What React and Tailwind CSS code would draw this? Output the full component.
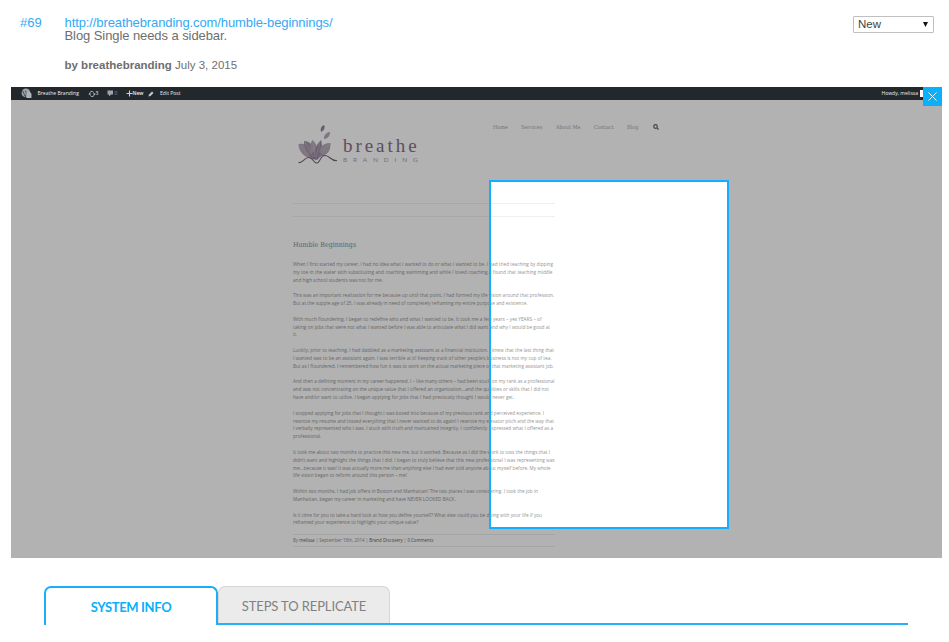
import React from "react";

// Each line of the article: [width in px, text]; null starts a new paragraph.
const ARTICLE = [
  [260, "When I first started my career, I had no idea what I wanted to do or what I wanted to be. I had tried teaching by dipping"],
  [259.5, "my toe in the water with substituting and coaching swimming and while I loved coaching, I found that teaching middle"],
  [89, "and high school students was not for me."],
  null,
  [260.5, "This was an important realization for me because up until that point, I had formed my life vision around that profession."],
  [234.5, "But at the supple age of 25, I was already in need of completely reframing my entire purpose and existence."],
  null,
  [248.5, "With much floundering, I began to redefine who and what I wanted to be. It took me a few years – yes YEARS – of"],
  [257, "taking on jobs that were not what I wanted before I was able to articulate what I did want and why I would be good at"],
  [4, "it."],
  null,
  [261, "Luckily, prior to teaching, I had dabbled as a marketing assistant at a financial institution. I knew that the last thing that"],
  [258.5, "I wanted was to be an assistant again. I was terrible at it! Keeping track of other people’s business is not my cup of tea."],
  [260.5, "But as I floundered, I remembered how fun it was to work on the actual marketing piece of that marketing assistant job."],
  null,
  [261.5, "And then a defining moment in my career happened. I – like many others – had been stuck on my rank as a professional"],
  [256, "and was not concentrating on the unique value that I offered an organization...and the qualities or skills that I did not"],
  [221, "have and/or want to utilize. I began applying for jobs that I had previously thought I would never get."],
  null,
  [251, "I stopped applying for jobs that I thought I was boxed into because of my previous rank and perceived experience. I"],
  [261, "rewrote my resume and tossed everything that I never wanted to do again! I rewrote my elevator pitch and the way that"],
  [260, "I verbally represented who I was. I stuck with truth and maintained integrity. I confidently expressed what I offered as a"],
  [27, "professional."],
  null,
  [257, "It took me about two months to practice this new me, but it worked. Because as I did the work to toss the things that I"],
  [261.5, "didn’t want and highlight the things that I did, I began to truly believe that this new professional I was representing was"],
  [257.5, "me...because it was! It was actually more me than anything else I had ever told anyone about myself before. My whole"],
  [114, "life vision began to reform around this person – me!"],
  null,
  [245, "Within two months, I had job offers in Boston and Manhattan! The two places I was considering. I took the job in"],
  [162, "Manhattan, began my career in marketing and have NEVER LOOKED BACK."],
  null,
  [249, "Is it time for you to take a hard look at how you define yourself? What else could you be doing with your life if you"],
  [125.5, "reframed your experience to highlight your unique value?"],
];

function Logo() {
  return (
    <div className="flex h-[42px] w-[130px] items-start">
      <svg className="h-[42px] w-[42px] shrink-0" viewBox="0 0 42 42" fill="none">
        <g fill="#b5a9b8">
          <path d="M27 1c1.500 2.500 0 5.500-3 7-1-3.500 .5-6 3-7Z" fill="#93849a" />
          <path d="M33 8c0 4-2 6.500-6 7-.5-3.500 2-6.500 6-7Z" />
          <path d="M1.500 20c5-1 8 0 9 3l3 11c-7-1-12-7-12-14Z" />
          <path d="M7 17c5 0 8 3 9 7l1 10c-7-3-10-9-10-17Z" fill="#a698ab" />
          <path d="M15.500 16c5 4 7 12 3 19-6-5-7-13-3-19Z" />
          <path d="M24 16c2 7 1 14-5 19-3-7 0-14 5-19Z" fill="#9b8ca1" />
          <path d="M33.500 19c0 8-2 12-12 14 0-8 3-14 12-14Z" />
          <path d="M11 31l8-4 7 3-6 6-5-1Z" fill="#9b8ca1" />
        </g>
        <path d="M3 21l10 12M8 18l8 15M16 18l2 15M23 18l-4 15M32 20l-10 13" stroke="#cdc4d0" strokeWidth=".5" />
        <path d="M1.500 38.500c4 1 6-5 10-5 5 0 5 6 8.500 5.500C23 39 23 31.500 28 31.500c5 0 6 6 12 5" stroke="#77647c" strokeWidth="1.100" />
      </svg>
      <div className="flex flex-col pl-[4px] pt-[12px]">
        <span className="whitespace-nowrap font-['Liberation_Serif',serif] text-[19px] leading-[20px] tracking-[2.950px] text-[#84718a]">breathe</span>
        <span className="whitespace-nowrap font-[Lato,sans-serif] text-[6.500px] leading-[8px] tracking-[5.800px] text-[#aca0af]">BRANDING</span>
      </div>
    </div>
  );
}

function AdminBar() {
  return (
    <div className="relative z-10 flex h-[13px] items-center bg-[#23282d] font-['Open_Sans',sans-serif] text-[5.050px] leading-[13px] whitespace-nowrap text-[#eeeeee]">
      <svg className="ml-[10px] size-[11px]" viewBox="0 0 20 20">
        <circle cx="9" cy="9" r="8" fill="#a0a5aa" />
        <path d="M3 5l5 11 2-6-2-5" stroke="#23282d" strokeWidth="1.300" fill="none" />
        <path d="M10 8l4-2 5 4v8h-9z" fill="#b0b5ba" />
      </svg>
      <span className="ml-[5.500px] w-[50px]">Breathe Branding</span>
      <svg className="size-[8px]" viewBox="0 0 16 16" fill="none" stroke="#b4b9be" strokeWidth="2">
        <path d="M3.500 9a4.500 4.500 0 0 1 8-4M12.500 7a4.500 4.500 0 0 1-8 4" />
        <path d="M9.500 7h6L12.500 10zM.5 9h6L3.500 6z" fill="#b4b9be" stroke="none" />
      </svg>
      <span className="w-[11px]">3</span>
      <svg className="size-[7px]" viewBox="0 0 14 14" fill="#a0a5aa">
        <path d="M1 1h11v8H8l-4 4V9H1z" />
      </svg>
      <span className="ml-px w-[11px] text-[#8a9095]">0</span>
      <svg className="size-[7px]" viewBox="0 0 14 14" stroke="#d0d4d8" strokeWidth="2.200">
        <path d="M7 1v12M1 7h12" />
      </svg>
      <span className="w-[15.500px] font-semibold">New</span>
      <svg className="size-[6px]" viewBox="0 0 12 12" fill="#c4c8cc">
        <path d="M1 11l1-4 6-6 3 3-6 6z" />
      </svg>
      <span className="ml-[6px]">Edit Post</span>
      <span className="ml-auto">Howdy, melissa</span>
      <span className="ml-[2px] h-[7px] w-[22px] bg-white" />
    </div>
  );
}

function BlogPage() {
  return (
    <div className="flex h-[458px] flex-col bg-white pl-[282px]">
      <div className="flex h-[103px] items-start">
        <div className="w-[200px] pl-[4px] pt-[24px]">
          <Logo />
        </div>
        <nav className="flex items-center pt-[22px] font-['DejaVu_Serif_Condensed','DejaVu_Serif',serif] text-[5.500px] leading-[10px] whitespace-nowrap text-[#a8a8a8]">
          <span className="w-[28px]">Home</span>
          <span className="w-[35px]">Services</span>
          <span className="w-[38px]">About Me</span>
          <span className="w-[33px]">Contact</span>
          <span className="w-[26px]">Blog</span>
          <svg className="size-[6px]" viewBox="0 0 12 12" fill="none" stroke="#666" strokeWidth="2.400">
            <circle cx="5" cy="5" r="3.600" />
            <path d="M8 8l3 3" />
          </svg>
        </nav>
      </div>
      <div className="h-[14px] w-[262px] border-y border-[#efefef]" />
      <h1 className="mt-[23px] font-['DejaVu_Serif_Condensed','DejaVu_Serif',serif] text-[7px] leading-[10px] text-[#8c8c8c]">Humble Beginnings</h1>
      <div className="mt-[11px] w-[262px] font-['Open_Sans',sans-serif] text-[4.700px] leading-[7.840px] text-[#949494]">
        {ARTICLE.map((line, i) =>
          line ? (
            <p key={i} className="h-[7.840px] whitespace-nowrap [text-align-last:justify]" style={{ width: line[0] }}>
              {line[1]}
            </p>
          ) : (
            <div key={i} className="h-[7.840px]" />
          )
        )}
      </div>
      <div className="mt-[7px] h-[13px] w-[262px] border-y border-[#ededed] font-['Open_Sans',sans-serif] text-[4.400px] leading-[11px] text-[#8c8c8c]">
        <p className="w-[139px] whitespace-nowrap [text-align-last:justify]">
          By <span className="text-[#606060]">melissa</span> | September 18th, 2014 | <span className="text-[#606060]">Brand Discovery</span> | <span className="text-[#606060]">0 Comments</span>
        </p>
      </div>
    </div>
  );
}

export default function App() {
  return (
    <div className="h-[642px] w-[949px] overflow-hidden bg-white font-['Liberation_Sans',Arial,sans-serif]">
      <header className="flex h-[87px] items-start pl-[20px] pr-[15px] pt-[16px] text-[13px] leading-[13px] text-[#6e6e6e]">
        <span className="w-[44.500px] text-[#35a9f3]">#69</span>
        <div className="flex-1 whitespace-nowrap">
          <p className="tracking-[-0.100px] text-[#35a9f3]">http://breathebranding.com/humble-beginnings/</p>
          <p className="tracking-[-0.080px]">Blog Single needs a sidebar.</p>
          <p className="mt-[17px] text-[11.500px]">
            <b>by breathebranding</b> July 3, 2015
          </p>
        </div>
        <div className="flex h-[17px] w-[81px] items-center justify-between rounded-[1px] border border-[#c0c0c0] pl-[4px] pr-[5px] text-[11.500px] text-[#444444]">
          <span>New</span>
          <svg className="h-[5px] w-[5px]" viewBox="0 0 5 5">
            <path d="M0 0h5L2.500 5z" fill="#111" />
          </svg>
        </div>
      </header>

      <main className="relative ml-[11px] h-[471px] w-[931px] overflow-hidden">
        <AdminBar />
        <BlogPage />
        <div className="absolute left-[478px] top-[93px] h-[349px] w-[240px] border-2 border-[#12aeff] shadow-[0_0_0_1000px_rgba(0,0,0,0.3)]" />
        <button className="absolute right-0 top-0 z-20 flex size-[19px] items-center justify-center bg-[#0bb0fb]">
          <svg className="size-[9px]" viewBox="0 0 9 9" stroke="white" strokeWidth="1">
            <path d="M.5.5l8 8M8.500.5l-8 8" />
          </svg>
        </button>
      </main>

      <div className="ml-[44px] mt-[28px] flex h-[39px] w-[864px] items-stretch font-[Lato,sans-serif] text-[13px]">
        <div className="flex w-[174px] items-center justify-center rounded-t-[7px] border-x-2 border-t-2 border-[#1badf8] pt-[2px] font-bold tracking-[-0.350px] text-[#0baefb]">SYSTEM INFO</div>
        <div className="flex flex-1 items-stretch border-b-2 border-[#27affa]">
          <div className="flex w-[172px] items-center justify-center rounded-t-[7px] border-x border-t border-[#d6d6d6] bg-[#ebebeb] pt-[3px] tracking-[-0.120px] text-[#808080]">STEPS TO REPLICATE</div>
        </div>
      </div>
    </div>
  );
}
